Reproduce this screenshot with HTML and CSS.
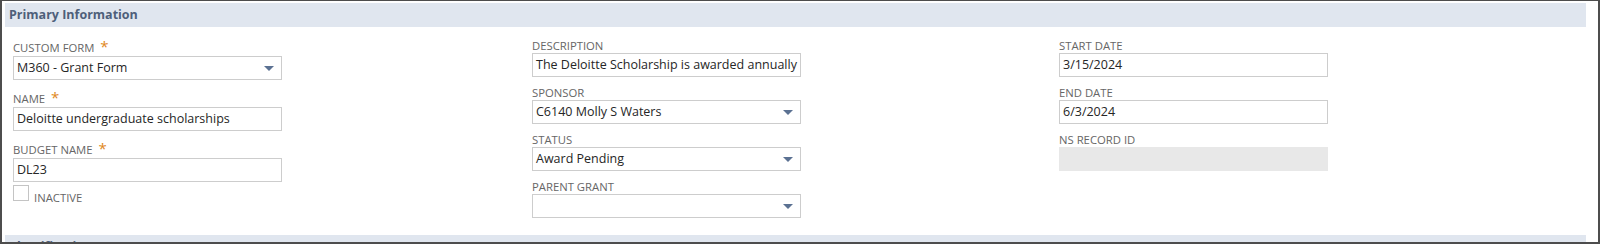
FILE: index.html
```html
<!DOCTYPE html>
<html lang="en">
<head>
    <meta charset="UTF-8">
    <meta name="viewport" content="width=device-width, initial-scale=1.0">
    <title>Grant Record</title>
    <link rel="stylesheet" href="styles.css">
</head>
<body>

    <div class="record">
        <div class="section-head">Primary Information</div>

        <div class="fields">
            <!-- left column -->
            <div class="col">
                <div class="field required">
                    <div class="field-label">Custom Form <span class="req">*</span></div>
                    <div class="input select">
                        <span class="value">M360 - Grant Form</span>
                        <svg class="caret" width="10" height="5" viewBox="0 0 10 5"><path d="M0 0H10L5 5Z"/></svg>
                    </div>
                </div>
                <div class="field required">
                    <div class="field-label">Name <span class="req">*</span></div>
                    <div class="input"><span class="value">Deloitte undergraduate scholarships</span></div>
                </div>
                <div class="field required">
                    <div class="field-label">Budget Name <span class="req">*</span></div>
                    <div class="input"><span class="value">DL23</span></div>
                </div>
                <div class="check-row">
                    <span class="checkbox"></span>
                    <span class="check-label">Inactive</span>
                </div>
            </div>

            <!-- middle column -->
            <div class="col">
                <div class="field">
                    <div class="field-label">Description</div>
                    <div class="input"><span class="value">The Deloitte Scholarship is awarded annually to students</span></div>
                </div>
                <div class="field">
                    <div class="field-label">Sponsor</div>
                    <div class="input select">
                        <span class="value">C6140 Molly S Waters</span>
                        <svg class="caret" width="10" height="5" viewBox="0 0 10 5"><path d="M0 0H10L5 5Z"/></svg>
                    </div>
                </div>
                <div class="field">
                    <div class="field-label">Status</div>
                    <div class="input select">
                        <span class="value">Award Pending</span>
                        <svg class="caret" width="10" height="5" viewBox="0 0 10 5"><path d="M0 0H10L5 5Z"/></svg>
                    </div>
                </div>
                <div class="field">
                    <div class="field-label">Parent Grant</div>
                    <div class="input select">
                        <span class="value"></span>
                        <svg class="caret" width="10" height="5" viewBox="0 0 10 5"><path d="M0 0H10L5 5Z"/></svg>
                    </div>
                </div>
            </div>

            <!-- right column -->
            <div class="col">
                <div class="field">
                    <div class="field-label">Start Date</div>
                    <div class="input"><span class="value">3/15/2024</span></div>
                </div>
                <div class="field">
                    <div class="field-label">End Date</div>
                    <div class="input"><span class="value">6/3/2024</span></div>
                </div>
                <div class="field">
                    <div class="field-label">NS Record ID</div>
                    <div class="input readonly"></div>
                </div>
            </div>
        </div>

        <div class="section-head">Classification</div>
    </div>

</body>
</html>
```

FILE: styles.css
```css
body {
    margin: 0;
    padding: 0;
    background: #fff;
    font-family: "Open Sans", Arial, sans-serif;
}

.record {
    height: 244px;
    box-sizing: border-box;
    border: solid #4d4d4d;
    border-width: 1px 2px 2px 2px;
    padding: 2px 12px 0 3px;
    overflow: hidden;
}

.section-head {
    height: 24px;
    line-height: 24px;
    padding-left: 4px;
    background: #e0e6ef;
    color: #4e5f7a;
    font-size: 12.5px;
    font-weight: bold;
}

.fields {
    display: grid;
    grid-template-columns: 519px 527px 1fr;
    padding: 12px 0 17px 8px;
}

.col {
    display: flex;
    flex-direction: column;
}

.field {
    display: flex;
    flex-direction: column;
    width: 269px;
    margin-bottom: 9px;
}

.field.required {
    margin-bottom: 10px;
}

.field:last-child {
    margin-bottom: 0;
}

.field-label {
    font-size: 11.3px;
    line-height: 14px;
    color: #666;
    text-transform: uppercase;
}

.field.required .field-label {
    line-height: 17px;
}

.req {
    color: #e0881c;
    font-size: 15px;
    line-height: 0;
    margin-left: 3px;
}

.input {
    position: relative;
    height: 24px;
    box-sizing: border-box;
    border: 1px solid #cdcdcd;
    background: #fff;
    padding: 0 3px;
    font-size: 12.5px;
    line-height: 22px;
    color: #262626;
    white-space: nowrap;
    overflow: hidden;
}

.input.select {
    padding-right: 24px;
}

.input.readonly {
    background: #e8e8e8;
    border-color: #e8e8e8;
}

.caret {
    position: absolute;
    right: 7px;
    top: 9px;
    fill: #5b7192;
}

/* checkbox sits right under the budget field */
.check-row {
    display: flex;
    align-items: flex-start;
    margin-top: -7px;
}

.checkbox {
    width: 16px;
    height: 16px;
    box-sizing: border-box;
    border: 1px solid #c4c4c4;
    background: #fff;
}

.check-label {
    margin: 6px 0 0 5px;
    font-size: 11.3px;
    line-height: 14px;
    color: #666;
    text-transform: uppercase;
}
```
